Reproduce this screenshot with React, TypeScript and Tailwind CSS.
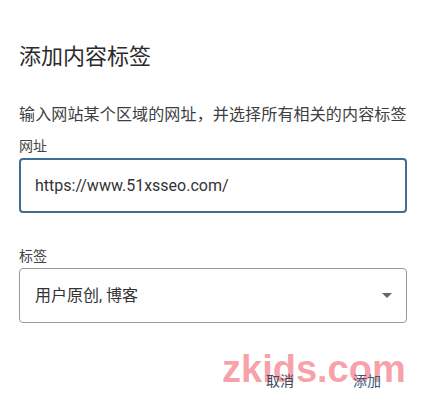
import React from "react";

export default function App() {
  const cjk = { fontFamily: 'Roboto, "Noto Sans CJK SC", sans-serif' };
  return (
    <div className="relative w-[426px] h-[402px] bg-white overflow-hidden" style={cjk}>
      <div className="flex flex-col px-[19px] pt-[43px]">
        <h1 className="text-[22px] leading-[28px] text-[#2b2b2b] font-normal">添加内容标签</h1>
        <p className="mt-[32px] text-[16px] leading-[24px] text-[#3c4043] whitespace-nowrap tracking-[0.15px]">
          输入网站某个区域的网址，并选择所有相关的内容标签
        </p>
        <label className="mt-[9px] text-[14px] leading-[20px] text-[#444]">网址</label>
        <div className="mt-[2px] h-[55px] rounded-[4px] border-2 border-[#3e6d98] flex items-center pl-[14px]">
          <span className="text-[16px] text-[#333]">https://www.51xsseo.com/</span>
        </div>
        <label className="mt-[33px] text-[14px] leading-[20px] text-[#444]">标签</label>
        <div className="mt-[2px] h-[55px] rounded-[4px] border border-[#9a9a9a] flex items-center justify-between pl-[15px] pr-[14px]">
          <span className="text-[16px] text-[#333]">用户原创, 博客</span>
          <svg width="10" height="5" viewBox="0 0 10 5">
            <path d="M0 0 L10 0 L5 5 Z" fill="#666" />
          </svg>
        </div>
        <div className="mt-[48px] flex justify-end gap-[59px] pr-[26px]">
          <span className="relative z-10 text-[14px] leading-[20px] text-[#3c4a5c]">取消</span>
          <span className="relative z-10 text-[14px] leading-[20px] text-[#3a5a7a]">添加</span>
        </div>
      </div>
      <div
        className="absolute left-[222px] top-[350px] text-[38px] leading-[38px] font-bold text-[rgba(242,100,110,0.6)] whitespace-nowrap pointer-events-none"
        style={{ fontFamily: '"Liberation Sans", Arial, sans-serif' }}
      >
        zkids.com
      </div>
    </div>
  );
}
